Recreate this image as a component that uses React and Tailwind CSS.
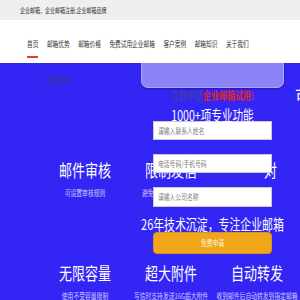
const F = "font-['Noto_Sans_CJK_SC','Noto_Sans',sans-serif]";

function NavItem({ children, active }) {
  return (
    <div className="flex flex-col">
      <span className="block text-[5.7px] leading-[8px] h-[8px] text-[#333] scale-y-[1.4] whitespace-nowrap">
        {children}
      </span>
      {active ? <div className="mt-[8px] h-[2px] bg-[#e2383a]" /> : null}
    </div>
  );
}

function Field({ children, tall }) {
  return (
    <div
      className={`w-full ${tall ? "h-[20px]" : "h-[19px]"} bg-white border border-[#c9c9d6] flex items-center pl-[4px]`}
    >
      <span className="block text-[5.8px] leading-[8px] h-[8px] text-[#7a7a7a] scale-y-[1.35] whitespace-nowrap">
        {children}
      </span>
    </div>
  );
}

function Feature({ title, sub, titleClass = "" }) {
  return (
    <div className="w-[86px] flex flex-col items-center">
      <span
        className={`block text-[13px] leading-[16px] h-[16px] text-white scale-y-[1.32] whitespace-nowrap ${titleClass}`}
      >
        {title}
      </span>
      <span className="block mt-[11px] text-[5.8px] leading-[8px] h-[8px] text-[#cfcaff] scale-y-[1.35] whitespace-nowrap">
        {sub}
      </span>
    </div>
  );
}

export default function App() {
  return (
    <div className={`w-[300px] h-[300px] overflow-hidden ${F}`}>
      <div className="h-[20px] bg-[#efefef] flex items-center pl-[20px]">
        <span className="block text-[5px] leading-[8px] h-[8px] text-[#333] scale-y-[1.4] whitespace-nowrap">
          企业邮箱，企业邮箱注册,企业邮箱品牌
        </span>
      </div>

      <nav className="h-[43px] bg-white flex items-start gap-[8.5px] pl-[27px] pt-[20px]">
        <NavItem active>首页</NavItem>
        <NavItem>邮箱优势</NavItem>
        <NavItem>邮箱价格</NavItem>
        <NavItem>免费试用企业邮箱</NavItem>
        <NavItem>客户案例</NavItem>
        <NavItem>邮箱知识</NavItem>
        <NavItem>关于我们</NavItem>
      </nav>

      <section className="relative h-[237px] bg-[#3326f5] overflow-hidden flex flex-col">
        <div className="flex pt-[13px] pl-[47px]">
          <span className="block text-[5.8px] leading-[8px] h-[8px] text-[#3b3886] scale-y-[1.35] whitespace-nowrap">
            服务范围
          </span>
        </div>

        <div className="flex ml-[42px] mt-[78px]">
          <Feature title="邮件审核" sub="可设置审核规则" />
          <Feature title="限制发信" sub="避免垃圾邮件大量发送" />
          <Feature title="对" sub="防止误发" titleClass="self-start ml-[50px]" />
        </div>
        <div className="flex ml-[42px] mt-[68px]">
          <Feature title="无限容量" sub="使用不受容量限制" />
          <Feature title="超大附件" sub="写信时支持发送16G超大附件" />
          <Feature title="自动转发" sub="收到邮件后自动转发到指定邮箱" />
        </div>

        <div className="absolute z-10 left-[141px] top-0 w-[143px] h-[25px] rounded-b-[7px] bg-[#8c84f6] border border-t-0 border-[#aca6fb] shadow-[0_1px_2px_rgba(20,10,120,0.5)]" />

        <span className="absolute left-[295px] top-[22px] text-[16px] leading-[20px] text-white">可</span>

        <div className="absolute z-10 left-[153px] top-0 w-[119px] flex flex-col items-center">
          <span className="block mt-[28px] text-[8px] leading-[10px] h-[10px] scale-y-[1.35] whitespace-nowrap text-[#4a448f]">
            立即申请<span className="text-[#e0261c] font-bold">企业邮箱试用!</span>
          </span>
          <span className="block mt-[7px] text-[10.6px] leading-[13px] h-[13px] text-white scale-y-[1.35] whitespace-nowrap">
            1000+项专业功能
          </span>
          <Field>请输入联系人姓名</Field>
          <div className="h-[14px]" />
          <Field>电话号码/手机号码</Field>
          <div className="h-[14px]" />
          <Field tall>请输入公司名称</Field>
          <div className="w-full flex justify-center mt-[8px]">
            <span className="block text-[10.9px] leading-[16px] h-[16px] text-white scale-y-[1.35] whitespace-nowrap">
              26年技术沉淀，专注企业邮箱
            </span>
          </div>
          <div className="mt-[1px] w-full h-[22px] rounded-[4px] bg-[#f0a61b] border border-[#d99512] flex items-center justify-center">
            <span className="block text-[5.8px] leading-[8px] h-[8px] text-[#fff6dc] scale-y-[1.35] whitespace-nowrap">
              免费申请
            </span>
          </div>
        </div>
      </section>
    </div>
  );
}
